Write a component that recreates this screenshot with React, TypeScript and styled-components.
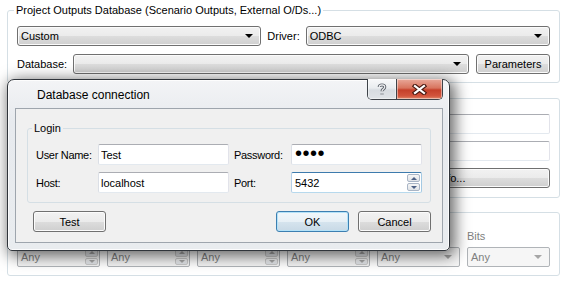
import React from "react";
import styled, { createGlobalStyle } from "styled-components";

const GlobalStyle = createGlobalStyle`
  html, body {
    margin: 0;
    padding: 0;
    background: #ffffff;
  }
  body {
    font-family: "Liberation Sans", Arial, sans-serif;
    font-size: 11px;
    color: #000;
  }
  * {
    box-sizing: border-box;
  }
`;

const Page = styled.div`
  position: relative;
  width: 564px;
  height: 286px;
  padding: 3px 4px 0 7px;
  overflow: hidden;
`;

const Group = styled.fieldset<{ $mt?: number; $pt: number; $pb: number; $px?: number }>`
  margin: ${(p) => p.$mt ?? 0}px 0 0;
  padding: ${(p) => p.$pt}px ${(p) => p.$px ?? 9}px ${(p) => p.$pb}px;
  border: 1px solid #d5dfe5;
  border-radius: 3px;
  min-width: 0;
`;

const LoginGroup = styled(Group)`
  margin: 0 11px;
`;

const Legend = styled.legend<{ $ml?: number }>`
  padding: 0 2px;
  margin-left: ${(p) => p.$ml ?? -3}px;
  line-height: 14px;
`;

const Row = styled.div`
  display: flex;
  align-items: center;
  height: 20px;
  & + & {
    margin-top: 8px;
  }
`;

const Label = styled.span<{ $gap?: number }>`
  white-space: nowrap;
  margin-right: ${(p) => p.$gap ?? 6}px;
`;

const Combo = styled.div<{ $gap?: number }>`
  flex: 1;
  height: 20px;
  display: flex;
  align-items: center;
  padding-left: 3px;
  margin-right: ${(p) => p.$gap ?? 0}px;
  border: 1px solid #707070;
  border-radius: 3px;
  background: linear-gradient(#f2f2f2 0%, #ebebeb 50%, #dddddd 51%, #cfcfcf 100%);
  box-shadow: inset 0 0 0 1px #fbfbfb;
`;

const ComboText = styled.span`
  flex: 1;
`;

const Caret = styled.span<{ $disabled?: boolean }>`
  width: 0;
  height: 0;
  margin-right: 7px;
  border-left: 4px solid transparent;
  border-right: 4px solid transparent;
  border-top: 4px solid ${(p) => (p.$disabled ? "#a6a6a6" : "#000")};
`;

const Button = styled.button<{ $w: number; $default?: boolean }>`
  width: ${(p) => p.$w}px;
  height: ${(p) => (p.$default !== undefined ? 21 : 20)}px;
  padding: 0;
  font: inherit;
  color: #000;
  border: 1px solid ${(p) => (p.$default ? "#3c7fb1" : "#707070")};
  border-radius: 3px;
  background: ${(p) =>
    p.$default
      ? "linear-gradient(#f1f7fb 0%, #e7f0f6 50%, #d6e4ee 51%, #c8d9e6 100%)"
      : "linear-gradient(#f2f2f2 0%, #ebebeb 50%, #dddddd 51%, #cfcfcf 100%)"};
  box-shadow: inset 0 0 0 1px ${(p) => (p.$default ? "#b4e2f8" : "#fbfbfb")};
`;

const TextBox = styled.input<{ $h?: number; $mask?: boolean }>`
  width: 100%;
  height: ${(p) => p.$h ?? 21}px;
  padding: ${(p) => (p.$mask ? "0 0 3px 3px" : "0 2px")};
  font: inherit;
  font-size: ${(p) => (p.$mask ? "20px" : "11px")};
  line-height: ${(p) => (p.$mask ? "14px" : "normal")};
  letter-spacing: ${(p) => (p.$mask ? "0.5px" : "0")};
  color: #000;
  background: #fff;
  border: 1px solid;
  border-color: #abadb3 #e2e3ea #e3e9ef #dbdfe6;
  border-radius: 2px;
  outline: none;
`;

const FormGrid = styled.div`
  display: grid;
  grid-template-columns: 56px 1fr;
  row-gap: 7px;
  align-items: center;
`;

const WideButton = styled(Button)`
  grid-column: 2;
  justify-self: end;
`;

const FilterGrid = styled.div`
  display: grid;
  grid-template-columns: repeat(6, 1fr);
  grid-template-rows: 14px 20px;
  column-gap: 7px;
  row-gap: 4px;
`;

const FilterLabel = styled.span`
  color: #808080;
  line-height: 14px;
`;

const SpinWrap = styled.div<{ $focused?: boolean; $disabled?: boolean }>`
  display: flex;
  height: ${(p) => (p.$disabled ? 20 : 21)}px;
  padding: 1px;
  border: 1px solid;
  border-radius: 2px;
  border-color: ${(p) =>
    p.$focused ? "#3d7bad #a4c9e3 #b7d9ed #b5cfe7" : "#b0b4b8"};
  background: ${(p) => (p.$disabled ? "#f6f6f6" : "#fff")};
  color: ${(p) => (p.$disabled ? "#808080" : "#000")};
`;

const SpinValue = styled.span`
  flex: 1;
  display: flex;
  align-items: center;
  padding-left: 2px;
`;

const SpinButtons = styled.div`
  width: 13px;
  display: flex;
  flex-direction: column;
  gap: 1px;
`;

const SpinButton = styled.div<{ $up?: boolean; $disabled?: boolean }>`
  flex: 1;
  display: flex;
  align-items: center;
  justify-content: center;
  border: 1px solid ${(p) => (p.$disabled ? "#cbcbcb" : "#a9b5c6")};
  border-radius: 2px;
  background: linear-gradient(#f6f6f6, #e0e3e7);
  &::after {
    content: "";
    width: 0;
    height: 0;
    border-left: 3px solid transparent;
    border-right: 3px solid transparent;
    ${(p) => (p.$up ? "border-bottom" : "border-top")}: 3px solid
      ${(p) => (p.$disabled ? "#a8a8a8" : "#4d6185")};
  }
`;

const DisabledCombo = styled.div`
  height: 20px;
  display: flex;
  align-items: center;
  padding-left: 3px;
  border: 1px solid #b0b4b8;
  border-radius: 2px;
  background: #f6f6f6;
  color: #808080;
`;

/* dialog window laid over the page */
const Dialog = styled.div`
  position: absolute;
  left: 7px;
  top: 79px;
  width: 443px;
  padding: 0 6px 7px 7px;
  border: 1px solid #30353b;
  border-radius: 7px 7px 5px 5px;
  background: linear-gradient(#f3f4f6 0%, #e7eaee 25%, #e9ecef 100%);
  box-shadow: 3px 3px 15px 2px rgba(0, 0, 0, 0.6), inset 0 0 0 1px rgba(255, 255, 255, 0.8);
  z-index: 1;
`;

const TitleBar = styled.div`
  display: flex;
  align-items: flex-start;
  height: 28px;
`;

const TitleText = styled.div`
  flex: 1;
  padding: 7px 0 0 22px;
  font-size: 12px;
  line-height: 16px;
`;

const CaptionButtons = styled.div`
  display: flex;
  height: 21px;
  margin-top: -1px;
  border: 1px solid #3e4349;
  border-top: none;
  border-radius: 0 0 5px 5px;
  overflow: hidden;
`;

const CaptionButton = styled.div<{ $close?: boolean }>`
  width: ${(p) => (p.$close ? 46 : 28)}px;
  display: flex;
  align-items: center;
  justify-content: center;
  background: ${(p) =>
    p.$close
      ? "linear-gradient(#e9a99a 0%, #d8755f 45%, #c5402a 55%, #d2553d 85%, #e08a6c 100%)"
      : "linear-gradient(#f8f9fa 0%, #e9ecef 45%, #d7dce1 55%, #dfe3e7 100%)"};
  box-shadow: inset 0 0 0 1px rgba(255, 255, 255, 0.45);
  & + & {
    border-left: 1px solid #3e4349;
  }
`;

const Client = styled.div`
  padding: 12px 0 10px;
  border: 1px solid #9ea5ad;
  background: #f0f0f0;
`;

const LoginGrid = styled.div`
  display: grid;
  grid-template-columns: 62px 131px 62px 131px;
  grid-auto-rows: 21px;
  row-gap: 7px;
  align-items: center;
`;

const FieldLabel = styled.span<{ $indent?: boolean }>`
  padding-left: ${(p) => (p.$indent ? 5 : 0)}px;
  letter-spacing: -0.3px;
  white-space: nowrap;
`;

const ButtonRow = styled.div`
  display: flex;
  gap: 9px;
  margin-top: 8px;
  padding: 0 11px 0 17px;
  > :nth-child(2) {
    margin-left: auto;
  }
`;

const filterLabels = ["Year", "Month", "Day", "Hour", "Type", "Bits"];

const Spin = ({ value, focused, disabled }: { value: string; focused?: boolean; disabled?: boolean }) => (
  <SpinWrap $focused={focused} $disabled={disabled}>
    <SpinValue>{value}</SpinValue>
    <SpinButtons>
      <SpinButton $up $disabled={disabled} />
      <SpinButton $disabled={disabled} />
    </SpinButtons>
  </SpinWrap>
);

const App = () => {
  return (
    <>
      <GlobalStyle />
      <Page>
        <Group $pt={9} $pb={8}>
          <Legend>Project Outputs Database (Scenario Outputs, External O/Ds...)</Legend>
          <Row>
            <Combo $gap={6}>
              <ComboText>Custom</ComboText>
              <Caret />
            </Combo>
            <Label>Driver:</Label>
            <Combo>
              <ComboText>ODBC</ComboText>
              <Caret />
            </Combo>
          </Row>
          <Row>
            <Label>Database:</Label>
            <Combo $gap={7}>
              <ComboText />
              <Caret />
            </Combo>
            <Button $w={74}>Parameters</Button>
          </Row>
        </Group>

        <Group $mt={15} $pt={15} $pb={9}>
          <FormGrid>
            <span>Name:</span>
            <TextBox readOnly $h={20} />
            <span>Description:</span>
            <TextBox readOnly $h={20} />
            <WideButton $w={243}>Scenario Info...</WideButton>
          </FormGrid>
        </Group>

        <Group $mt={14} $pt={16} $pb={8}>
          <FilterGrid>
            {filterLabels.map((l) => (
              <FilterLabel key={l}>{l}</FilterLabel>
            ))}
            <Spin value="Any" disabled />
            <Spin value="Any" disabled />
            <Spin value="Any" disabled />
            <Spin value="Any" disabled />
            <DisabledCombo>
              <ComboText>Any</ComboText>
              <Caret $disabled />
            </DisabledCombo>
            <DisabledCombo>
              <ComboText>Any</ComboText>
              <Caret $disabled />
            </DisabledCombo>
          </FilterGrid>
        </Group>

        <Dialog>
          <TitleBar>
            <TitleText>Database connection</TitleText>
            <CaptionButtons>
              <CaptionButton>
                <svg width="10" height="13" viewBox="0 0 10 13">
                  <path
                    d="M2.2 4 C2.2 1.2 7.8 1.2 7.8 4 C7.8 6 5 6 5 8.2 M5 10.6 V11.4"
                    fill="none"
                    stroke="#5d636b"
                    strokeWidth="3"
                  />
                  <path
                    d="M2.2 4 C2.2 1.2 7.8 1.2 7.8 4 C7.8 6 5 6 5 8.2 M5 10.6 V11.4"
                    fill="none"
                    stroke="#f3f4f6"
                    strokeWidth="1.1"
                  />
                </svg>
              </CaptionButton>
              <CaptionButton $close>
                <svg width="15" height="11" viewBox="0 0 15 11">
                  <path d="M3 2 L12 9 M12 2 L3 9" stroke="#4a1a12" strokeWidth="4.4" strokeLinecap="square" />
                  <path d="M3 2 L12 9 M12 2 L3 9" stroke="#ffffff" strokeWidth="2.2" strokeLinecap="square" />
                </svg>
              </CaptionButton>
            </CaptionButtons>
          </TitleBar>
          <Client>
            <LoginGroup $pt={9} $pb={9} $px={8}>
              <Legend $ml={-4}>Login</Legend>
              <LoginGrid>
                <FieldLabel>User Name:</FieldLabel>
                <TextBox readOnly value="Test" />
                <FieldLabel $indent>Password:</FieldLabel>
                <TextBox readOnly type="password" value="test" $mask />
                <FieldLabel>Host:</FieldLabel>
                <TextBox readOnly value="localhost" />
                <FieldLabel $indent>Port:</FieldLabel>
                <Spin value="5432" focused />
              </LoginGrid>
            </LoginGroup>
            <ButtonRow>
              <Button $w={73} $default={false}>Test</Button>
              <Button $w={73} $default>OK</Button>
              <Button $w={73} $default={false}>Cancel</Button>
            </ButtonRow>
          </Client>
        </Dialog>
      </Page>
    </>
  );
};

export default App;
